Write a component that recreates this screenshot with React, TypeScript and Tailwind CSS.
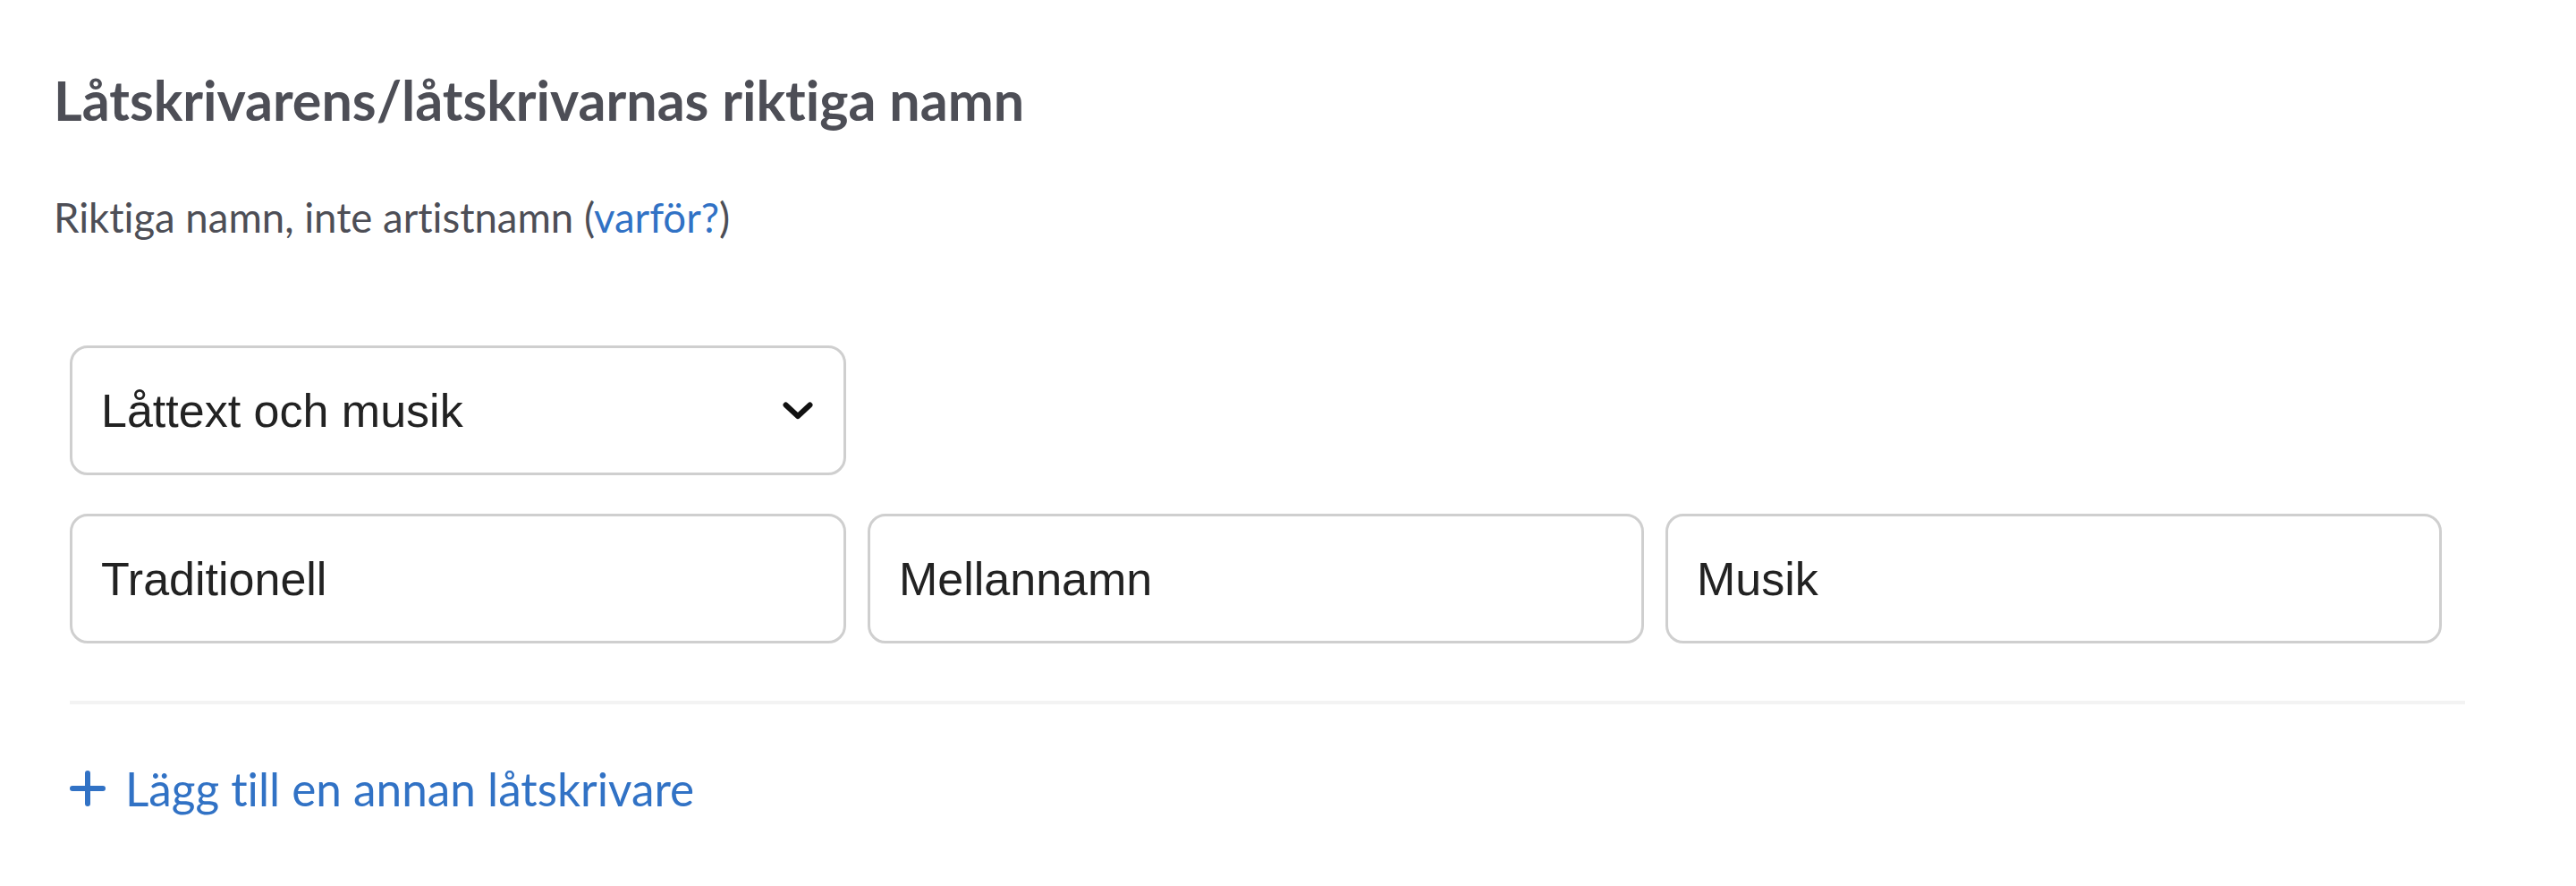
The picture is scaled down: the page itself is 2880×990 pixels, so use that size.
import React from 'react';

const lato = '[font-family:Lato,"Noto_Sans",sans-serif] [font-variant-ligatures:none]';

function Chevron() {
  return (
    <svg width="34" height="20" viewBox="0 0 34 20" fill="none" aria-hidden="true">
      <polyline
        points="3.5,3.5 17,16 30.5,3.5"
        stroke="#111"
        strokeWidth="6"
        strokeLinecap="round"
        strokeLinejoin="round"
      />
    </svg>
  );
}

function Plus() {
  return (
    <svg width="40" height="40" viewBox="0 0 40 40" fill="none" aria-hidden="true">
      <path d="M20 3v34M3 20h34" stroke="#3172c5" strokeWidth="6" strokeLinecap="round" />
    </svg>
  );
}

const fieldClass =
  'flex h-[145px] w-[868px] items-center rounded-[20px] border-[3px] border-[#cfcfcf] bg-white pl-[32px] pr-[34px] text-[52px] text-[#222] [font-family:"Liberation_Sans",Arial,sans-serif]';

export default function App() {
  const names = ['Traditionell', 'Mellannamn', 'Musik'];

  return (
    <div className="h-[990px] w-[2880px] bg-white pl-[60px] pt-[76px]">
      <h2 className={`${lato} text-[61px] font-bold leading-[72px] text-[#4d4e56]`}>
        Låtskrivarens/låtskrivarnas riktiga namn
      </h2>

      <p className={`${lato} mt-[68px] text-[45.5px] leading-[53px] text-[#4d4e56]`}>
        Riktiga namn, inte artistnamn (<span className="text-[#3172c5]">varför?</span>)
      </p>

      <div className="mt-[117px] pl-[18px]">
        {/* Role select */}
        <div className={`${fieldClass} justify-between`}>
          <span>Låttext och musik</span>
          <Chevron />
        </div>

        {/* Name fields */}
        <div className="mt-[43px] flex gap-[24px]">
          {names.map((n) => (
            <div key={n} className={fieldClass}>
              {n}
            </div>
          ))}
        </div>

        <div className="mt-[64px] h-[4px] w-[2678px] bg-[#f3f3f3]" />

        <div className={`${lato} mt-[63px] flex items-center gap-[22px] text-[51.3px] leading-[62px] text-[#3172c5]`}>
          <Plus />
          <span>Lägg till en annan låtskrivare</span>
        </div>
      </div>
    </div>
  );
}
